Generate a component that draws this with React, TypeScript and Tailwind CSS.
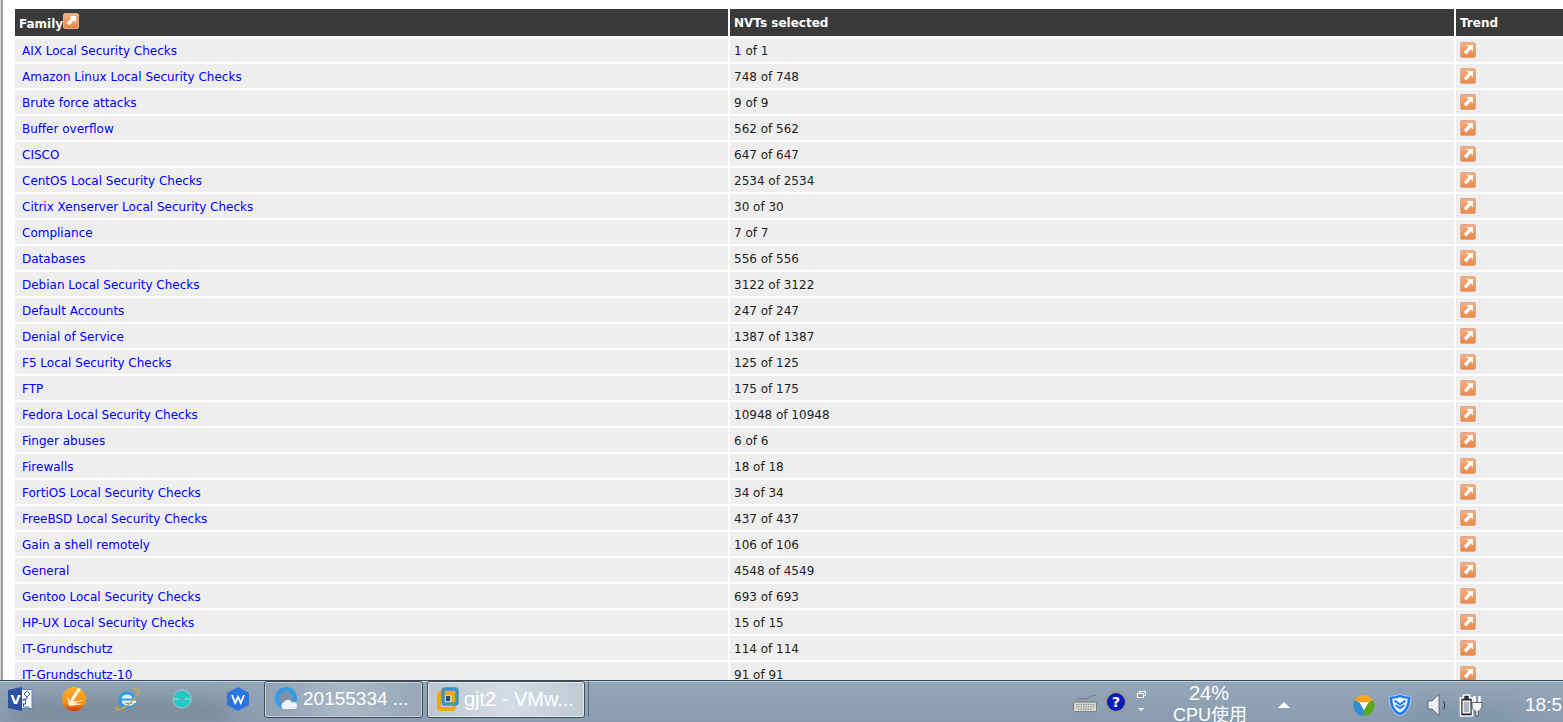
import React from "react";

const rows: [string, string][] = [
  ["AIX Local Security Checks", "1 of 1"],
  ["Amazon Linux Local Security Checks", "748 of 748"],
  ["Brute force attacks", "9 of 9"],
  ["Buffer overflow", "562 of 562"],
  ["CISCO", "647 of 647"],
  ["CentOS Local Security Checks", "2534 of 2534"],
  ["Citrix Xenserver Local Security Checks", "30 of 30"],
  ["Compliance", "7 of 7"],
  ["Databases", "556 of 556"],
  ["Debian Local Security Checks", "3122 of 3122"],
  ["Default Accounts", "247 of 247"],
  ["Denial of Service", "1387 of 1387"],
  ["F5 Local Security Checks", "125 of 125"],
  ["FTP", "175 of 175"],
  ["Fedora Local Security Checks", "10948 of 10948"],
  ["Finger abuses", "6 of 6"],
  ["Firewalls", "18 of 18"],
  ["FortiOS Local Security Checks", "34 of 34"],
  ["FreeBSD Local Security Checks", "437 of 437"],
  ["Gain a shell remotely", "106 of 106"],
  ["General", "4548 of 4549"],
  ["Gentoo Local Security Checks", "693 of 693"],
  ["HP-UX Local Security Checks", "15 of 15"],
  ["IT-Grundschutz", "114 of 114"],
  ["IT-Grundschutz-10", "91 of 91"],
];

function Trend() {
  return (
    <svg width="16" height="16" viewBox="0 0 16 16" className="block">
      <defs>
        <linearGradient id="tr" x1="0" y1="0" x2="0" y2="1">
          <stop offset="0" stopColor="#f6b083" />
          <stop offset="1" stopColor="#ea8746" />
        </linearGradient>
      </defs>
      <rect x="0.5" y="0.5" width="15" height="15" rx="1.5" fill="url(#tr)" stroke="#dcaa8c" />
      <path d="M6.500 3H13V9.500L10.800 7.300 6.300 12.500 3.800 10 8.600 5.200z" fill="#fff" />
    </svg>
  );
}

function Row({ a, b }: { a: string; b: string }) {
  return (
    <div className="flex gap-[2px] h-[24px] mb-[2px] text-[12px] leading-[24px]">
      <div className="w-[713px] shrink-0 bg-[#eeeeee] pl-[7px] pt-[1px]">
        <a className="text-[#0000ff]">{a}</a>
      </div>
      <div className="w-[724px] shrink-0 bg-[#eeeeee] pl-[4px] pt-[1px] text-[#1c1c1c]">{b}</div>
      <div className="flex-1 bg-[#eeeeee] pl-[4px] pt-[4px]">
        <Trend />
      </div>
    </div>
  );
}

function Visio() {
  return (
    <svg width="26" height="26" viewBox="0 0 26 26">
      <rect x="11" y="3.500" width="13" height="19" fill="#fff" stroke="#5b7fb8" />
      <path d="M19 5l3 3-3 3-3-3z" fill="#fff" stroke="#3d5fa5" />
      <rect x="13.500" y="14" width="4" height="4" fill="#fff" stroke="#3d5fa5" />
      <path d="M19 11v2h-3.500v1M15.500 18v3h6" stroke="#3d5fa5" fill="none" />
      <path d="M0 4 14 1v24L0 22z" fill="#2f4f9f" />
      <text x="2.500" y="18" fontSize="13" fontWeight="700" fill="#fff" fontFamily="'DejaVu Sans',sans-serif">V</text>
    </svg>
  );
}

function Orange() {
  return (
    <svg width="26" height="26" viewBox="0 0 26 26">
      <defs>
        <linearGradient id="og" x1="0" y1="0" x2="0" y2="1">
          <stop offset="0" stopColor="#f9b429" />
          <stop offset="0.7" stopColor="#f08a14" />
          <stop offset="1" stopColor="#d8330e" />
        </linearGradient>
      </defs>
      <circle cx="13" cy="13" r="12" fill="url(#og)" />
      <path d="M17 2 9.500 13.500 10 18 25 14 12 15.500 20 3z" fill="#fff5dc" />
      <path d="M6 10 8 20 23 18 10 17z" fill="#fff5dc" />
    </svg>
  );
}

function IE() {
  return (
    <svg width="26" height="26" viewBox="0 0 26 26">
      <circle cx="13" cy="14" r="8.500" fill="#2f9be8" />
      <path d="M7.500 12.500h11c-.3-2.500-2.400-4-5.400-4s-5 1.500-5.600 4z" fill="#dff2ff" />
      <rect x="8" y="14.500" width="14" height="2.500" fill="#dff2ff" />
      <path d="M20 16.500c-1 1.800-3.500 2.600-5.500 2.500-3 0-5-1.500-6.300-3.500" stroke="#dff2ff" strokeWidth="1.400" fill="none" />
      <path d="M3 21C1 24 4 25 9 22c6-3 12-9 15-15 2-4 0-6-5-4" stroke="#d9a93a" strokeWidth="1.400" fill="none" />
    </svg>
  );
}

function Disc() {
  return (
    <svg width="20" height="20" viewBox="0 0 22 22">
      <circle cx="11" cy="11" r="10" fill="#27c6c6" stroke="#b8c8cc" />
      <path d="M2 11h6M14 11h6" stroke="#a7eeee" />
      <circle cx="11" cy="11" r="1.600" fill="#7a9aa0" />
    </svg>
  );
}

function Wps() {
  return (
    <svg width="24" height="26" viewBox="0 0 24 26">
      <path d="M12 1 23 7v12l-11 6L1 19V7z" fill="#2a75e0" />
      <path d="M6 9l3.200 8 2.800-6 2.800 6L18 9" stroke="#fff" strokeWidth="1.800" fill="none" />
    </svg>
  );
}

function QQBrowser() {
  return (
    <svg width="24" height="24" viewBox="0 0 24 24" className="shrink-0">
      <circle cx="12" cy="11" r="9" fill="#7f93a8" stroke="#2e9bec" strokeWidth="4" />
      <path d="M9 22a4 4 0 0 1 1-7 4.500 4.500 0 0 1 8 .5 3.200 3.200 0 0 1 5 3c0 2-1 3.500-3 3.500z" fill="#eef6fc" />
    </svg>
  );
}

function VMware() {
  return (
    <svg width="22" height="24" viewBox="0 0 22 24" className="shrink-0">
      <rect x="2" y="6" width="15" height="16" rx="2" fill="none" stroke="#f0a31c" strokeWidth="4" />
      <rect x="6" y="2" width="14" height="15" rx="2" fill="none" stroke="#3f93b8" strokeWidth="3.500" />
      <rect x="9" y="9" width="4" height="5" fill="#304f6a" />
    </svg>
  );
}

function Keyboard() {
  return (
    <svg width="24" height="20" viewBox="0 0 25 20">
      <path d="M4 8C8 2 12 8 16 5s5-3 7-3" stroke="#6e747a" fill="none" />
      <rect x="0.500" y="9" width="24" height="10" rx="1" fill="#d8d8d4" stroke="#77736c" />
      <path d="M3 11.500h19M3 14h19M5 16.500h15" stroke="#7c7c78" strokeDasharray="1.500 1" />
    </svg>
  );
}

function Help() {
  return (
    <div className="w-[22px] h-[22px] rounded-full bg-[#0a1fb8] border-2 border-[#9a9a90] text-white font-bold text-[14px] leading-[18px] text-center">
      ?
    </div>
  );
}

function ColorWheel() {
  return (
    <svg width="23" height="23" viewBox="0 0 22 22">
      <path d="M11 11 2.500 6A10 10 0 0 1 20 6z" fill="#f5a623" />
      <path d="M11 11 20 6A10 10 0 0 1 11 21z" fill="#5aa81e" />
      <path d="M11 11 11 21A10 10 0 0 1 2.500 6z" fill="#2e8fd8" />
      <path d="M7 8h9l-4.500 7.500z" fill="#f4f6f8" />
    </svg>
  );
}

function Shield() {
  return (
    <svg width="26" height="26" viewBox="0 0 24 24">
      <path d="M12 2c3 1.500 6 2 10 2 0 9-3 15-10 18C5 19 2 13 2 4c4 0 7-.5 10-2z" fill="#1c7bf0" stroke="#f0f6ff" strokeWidth="0.500" />
      <path d="M5 6c3 0 5-.5 7-1.500C14 5.500 16 6 19 6c0 6-2 10.500-7 13C7 16.500 5 12 5 6z" fill="#eef5ff" />
      <path d="M7 8l5 3.500L17 8M8 12l4 3 4-3" stroke="#1c7bf0" strokeWidth="1.800" fill="none" />
    </svg>
  );
}

function Speaker() {
  return (
    <svg width="20" height="24" viewBox="0 0 20 24">
      <path d="M1 8h4l7-6.500v21L5 16H1z" fill="#eef1f4" stroke="#4c5560" strokeWidth="0.800" />
      <path d="M16.500 8c1.500 2.500 1.500 5.500 0 8" stroke="#2f3a44" fill="none" />
    </svg>
  );
}

function Power() {
  return (
    <svg width="24" height="24" viewBox="0 0 24 24">
      <path d="M1.500 5h3V2h6v3h3v18h-12z" fill="#26292d" stroke="#f6f8fa" strokeWidth="1.600" />
      <rect x="3.500" y="7.500" width="8" height="13" fill="#f2f4f6" />
      <rect x="4.800" y="8.800" width="5.400" height="10.400" fill="#a9b4be" />
      <path d="M15.500 3v7M20.500 3v7" stroke="#fff" strokeWidth="2.400" />
      <path d="M13 9.500h10v3.500c0 3-2.500 5-3.800 5.200V23h-2.400v-4.800C15.500 18 13 16 13 13z" fill="#f6f8fa" stroke="#26292d" strokeWidth="0.700" />
    </svg>
  );
}

export default function App() {
  return (
    <div className="w-[1563px] h-[722px] overflow-hidden bg-white flex flex-col font-['DejaVu_Sans',sans-serif]">
      <main className="h-[680px] shrink-0 overflow-hidden flex">
        <div className="w-[1px] shrink-0 bg-[#d9d9d9]" />
        <div className="w-[2px] shrink-0 bg-[#9c9c9c]" />
        <div className="flex-1 pl-[12px] pt-[9px] overflow-hidden">
          <div className="flex gap-[2px] h-[27px] mb-[2px] text-[12px] font-bold text-white leading-[27px]">
            <div className="w-[713px] shrink-0 bg-[#3a3a3a] pl-[4px] flex">
              <span className="pt-[2px]">Family</span>
              <span className="mt-[4px] w-[16px] h-[16px]">
                <Trend />
              </span>
            </div>
            <div className="w-[724px] shrink-0 bg-[#3a3a3a] pl-[4px] pt-[1px]">NVTs selected</div>
            <div className="flex-1 bg-[#3a3a3a] pl-[4px] pt-[1px]">Trend</div>
          </div>
          {rows.map(([a, b]) => (
            <Row key={a} a={a} b={b} />
          ))}
        </div>
      </main>
      <footer className="relative h-[42px] shrink-0 flex items-center overflow-hidden border-t border-[#3d4a56] bg-gradient-to-b from-[#94a7b8] to-[#8a9db0] shadow-[inset_0_1px_0_#c3cfd9]">
        <div className="absolute left-[10px] top-[20px] w-[220px] h-[20px] bg-[#5c6772] opacity-50 blur-md" />
        <div className="absolute left-[1400px] top-[27px] w-[120px] h-[12px] bg-[#5a7a8a] opacity-40 blur-md" />
        <div className="relative flex items-center h-full w-full">
          <div className="w-[8px] shrink-0" />
          <div className="w-[53px] shrink-0 -mt-[5px]"><Visio /></div>
          <div className="w-[53px] shrink-0 -mt-[5px]"><Orange /></div>
          <div className="w-[58px] shrink-0 -mt-[6px]"><IE /></div>
          <div className="w-[54px] shrink-0 -mt-[5px]"><Disc /></div>
          <div className="w-[38px] shrink-0 -mt-[5px]"><Wps /></div>
          <div className="w-[159px] h-[37px] shrink-0 -mt-[5px] flex items-center gap-[5px] pl-[9px] rounded-[3px] border border-[#444d57] shadow-[inset_0_0_0_1px_#c4cfd8] bg-gradient-to-r from-[#8fa1b3] via-[#aab8c5] to-[#96a8b8] text-white text-[19px] font-['Liberation_Sans',sans-serif]">
            <QQBrowser />
            <span className="whitespace-nowrap">20155334 ...</span>
          </div>
          <div className="w-[158px] h-[37px] shrink-0 -mt-[5px] ml-[4px] flex items-center gap-[5px] pl-[9px] rounded-[3px] border border-[#444d57] shadow-[inset_0_0_0_1px_#e4e9ee] bg-gradient-to-r from-[#bcc7d2] via-[#d4dce3] to-[#c0cad5] text-white text-[20px] font-['Liberation_Sans',sans-serif]">
            <VMware />
            <span className="whitespace-nowrap">gjt2 - VMw...</span>
          </div>
          <div className="w-px h-[36px] ml-[3px] -mt-[5px] bg-[#5d6a76] shrink-0" />
          <div className="w-[484px] shrink-0" />
          <div className="w-[32px] shrink-0 mt-[3px]"><Keyboard /></div>
          <div className="w-[32px] shrink-0 mt-[1px]"><Help /></div>
          <div className="w-[36px] shrink-0 flex flex-col items-start gap-[10px] text-white -mt-[1px]">
            <svg width="9" height="7" viewBox="0 0 9 7">
              <rect x="2.500" y="0.500" width="6" height="4" fill="none" stroke="#fff" />
              <rect x="0.500" y="2.500" width="6" height="4" fill="#8b9eb0" stroke="#fff" />
            </svg>
            <div className="ml-[1px] w-0 h-0 border-x-[3px] border-x-transparent border-t-[3px] border-t-white" />
          </div>
          <div className="w-[72px] shrink-0 h-full text-center text-white text-[18px] leading-[22px] pt-[1px] font-['Liberation_Sans','Noto_Sans_CJK_SC',sans-serif] whitespace-nowrap">
            <div className="text-[20px]">24%</div>
            <div>CPU使用</div>
          </div>
          <div className="ml-[33px] w-0 h-0 shrink-0 border-x-[6px] border-x-transparent border-b-[6px] border-b-white mt-[7px]" />
          <div className="w-[62px] shrink-0" />
          <div className="w-[35px] shrink-0 mt-[7px]"><ColorWheel /></div>
          <div className="w-[40px] shrink-0 mt-[7px]"><Shield /></div>
          <div className="w-[32px] shrink-0 mt-[7px]"><Speaker /></div>
          <div className="w-[66px] shrink-0 mt-[7px]"><Power /></div>
          <div className="text-white text-[19px] whitespace-nowrap mt-[7px] font-['Liberation_Sans',sans-serif]">18:5</div>
        </div>
      </footer>
    </div>
  );
}
